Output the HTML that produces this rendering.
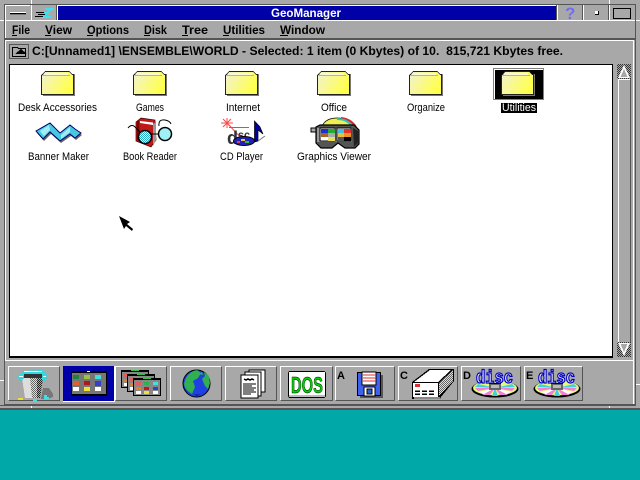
<!DOCTYPE html>
<html><head><meta charset="utf-8"><title>GeoManager</title>
<style>
html,body{margin:0;padding:0;background:#00a8a8;overflow:hidden}
svg{display:block;position:absolute;left:0;top:0}
text{font-family:"Liberation Sans",sans-serif;fill:#000;white-space:pre}
.b{font-weight:bold;font-size:12px}
.l{font-size:11px}
</style></head><body>
<svg width="640" height="480" viewBox="0 0 640 480" xmlns="http://www.w3.org/2000/svg" shape-rendering="crispEdges">
<defs>
<linearGradient id="fg" x1="0" y1="0" x2="1" y2="0.4"><stop offset="0" stop-color="#f2f2d0"/><stop offset="1" stop-color="#ffff50"/></linearGradient>
<pattern id="ck" width="2" height="2" patternUnits="userSpaceOnUse"><rect width="2" height="2" fill="#a8a8a8"/><rect width="1" height="1" fill="#333"/><rect x="1" y="1" width="1" height="1" fill="#333"/></pattern>
<pattern id="ck2" width="2" height="2" patternUnits="userSpaceOnUse"><rect width="2" height="2" fill="#fff"/><rect width="1" height="1" fill="#777"/><rect x="1" y="1" width="1" height="1" fill="#777"/></pattern>
<pattern id="ck3" width="2" height="2" patternUnits="userSpaceOnUse"><rect width="2" height="2" fill="#aaa"/><rect width="1" height="1" fill="#222"/><rect x="1" y="1" width="1" height="1" fill="#222"/></pattern>
<pattern id="ck4" width="2" height="2" patternUnits="userSpaceOnUse"><rect width="2" height="2" fill="#ddd"/><rect width="1" height="1" fill="#666"/><rect x="1" y="1" width="1" height="1" fill="#666"/></pattern>
<pattern id="ckc" width="2" height="2" patternUnits="userSpaceOnUse"><rect width="2" height="2" fill="#fff"/><rect width="1" height="1" fill="#20b0c8"/><rect x="1" y="1" width="1" height="1" fill="#20b0c8"/></pattern>
<g id="folder">
<path d="M32 3h2v22h-32v-2h30z" fill="#777"/>
<path d="M0 4L4 0H28L31 3H33V24H0z" fill="#222"/>
<path d="M1 5L4 1H28L31 4H32V23H1z" fill="url(#fg)"/>
<path d="M2 4h27v1h-27z" fill="#b8b880"/>
<path d="M5 2h22v2h-22z" fill="#f8f8dc"/>
</g>
<g id="disc">
<ellipse cx="23" cy="21" rx="23.500" ry="8.500" fill="#000" shape-rendering="auto"/>
<ellipse cx="23" cy="20" rx="22" ry="7.500" fill="#e8f878" shape-rendering="auto"/>
<path d="M23 20L10 27H18ZM23 20L36 27H28ZM23 20L3 20L6 23ZM23 20L43 20L40 23Z" fill="#f080d8" shape-rendering="auto"/>
<path d="M23 20L6 16L3 19ZM23 20L40 16L43 19ZM23 20L20 28H26Z" fill="#40d0e0" shape-rendering="auto"/>
<path d="M23 20L12 26L7 24ZM23 20L34 26L39 24Z" fill="#ffffff" shape-rendering="auto"/>
<rect x="17" y="16" width="12" height="6" fill="#666"/>
<rect x="19" y="17" width="8" height="3" fill="#bbb"/>
<rect x="17" y="15" width="12" height="1" fill="#000"/>
<text x="4" y="15" textLength="37" lengthAdjust="spacingAndGlyphs" style="font-size:18px;font-weight:bold;fill:#fff;stroke:#0000c0;stroke-width:1.300px;font-family:'Liberation Mono',monospace" shape-rendering="auto">disc</text>
</g>
<g id="mw">
<rect width="28" height="18" fill="#000"/>
<rect x="1" y="2" width="26" height="15" fill="#888"/>
<rect x="10" y="0" width="8" height="1" fill="#30c040"/>
<rect x="3" y="4" width="5" height="3" fill="#e06060"/><rect x="11" y="4" width="5" height="3" fill="#30b050"/><rect x="20" y="4" width="5" height="3" fill="#40e0e0"/>
<rect x="3" y="9" width="5" height="3" fill="#e08030"/><rect x="11" y="9" width="5" height="3" fill="#c01818"/><rect x="20" y="9" width="5" height="3" fill="#3040d0"/>
<rect x="3" y="13" width="5" height="3" fill="#fff"/><rect x="11" y="13" width="5" height="3" fill="#f0e040"/><rect x="20" y="13" width="5" height="3" fill="#fff"/>
</g>
</defs>

<!-- desktop -->
<rect width="640" height="480" fill="#00a8a8"/>
<rect width="640" height="409" fill="#a8a8a8"/>
<rect x="0" y="408" width="640" height="2" fill="#555"/>
<rect x="0" y="405" width="636" height="1" fill="#555"/>
<rect x="0" y="20" width="5" height="1" fill="#fff"/>
<rect x="31" y="0" width="1" height="4" fill="#fff"/>
<rect x="609" y="0" width="1" height="4" fill="#fff"/>
<rect x="31" y="406" width="1" height="2" fill="#fff"/>
<rect x="609" y="406" width="1" height="2" fill="#fff"/>
<rect x="636" y="20" width="4" height="1" fill="#fff"/>
<rect x="636" y="384" width="4" height="1" fill="#fff"/>
<rect x="0" y="380" width="4" height="1" fill="#fff"/>
<rect x="4" y="4" width="631" height="1" fill="#555"/>
<rect x="4" y="4" width="1" height="401" fill="#555"/>
<rect x="635" y="4" width="1" height="402" fill="#555"/>

<!-- title bar -->
<rect x="5" y="5" width="25" height="1" fill="#fff"/><rect x="5" y="5" width="1" height="15" fill="#fff"/>
<rect x="10" y="12" width="16" height="1" fill="#fff"/><rect x="10" y="13" width="16" height="1" fill="#000"/><rect x="10" y="14" width="16" height="1" fill="#777"/>
<rect x="31" y="5" width="1" height="15" fill="#fff"/>
<path d="M45 8h9v2h-2l-4 3h2v1h-2l-3 2h6v2h-10l1-2 4-3h-2v-1h2l3-2h-4z" fill="#40e0f0"/>
<path d="M36 12h8v1h-8zM38 14h7v1h-7zM35 16h8v1h-8z" fill="#000"/>
<rect x="56" y="5" width="1" height="15" fill="#555"/>
<rect x="57" y="5" width="500" height="15" fill="#fff"/>
<rect x="58" y="6" width="498" height="14" fill="#0000a8"/>
<text x="271" y="17" textLength="70" lengthAdjust="spacingAndGlyphs" class="b" style="fill:#fff">GeoManager</text>
<rect x="556" y="5" width="1" height="15" fill="#555"/>
<rect x="557" y="5" width="1" height="15" fill="#fff"/>
<text x="565" y="19" style="fill:#7070e8;font-size:17px;font-weight:bold">?</text>
<rect x="582" y="5" width="1" height="15" fill="#555"/>
<rect x="583" y="5" width="1" height="15" fill="#fff"/>
<rect x="595" y="11" width="4" height="4" fill="#000"/><rect x="595" y="11" width="3" height="3" fill="#fff"/>
<rect x="608" y="5" width="1" height="15" fill="#555"/>
<rect x="609" y="5" width="1" height="15" fill="#fff"/>
<rect x="613" y="8" width="18" height="11" fill="#000"/><rect x="614" y="9" width="16" height="9" fill="#a8a8a8"/>
<rect x="5" y="20" width="630" height="1" fill="#fff"/>

<!-- menu -->
<rect x="5" y="21" width="1" height="18" fill="#fff"/>
<g>
<text x="12" y="34" class="b" textLength="18" lengthAdjust="spacingAndGlyphs">File</text><rect x="12" y="35" width="5" height="1"/>
<text x="45" y="34" class="b" textLength="27" lengthAdjust="spacingAndGlyphs">View</text><rect x="45" y="35" width="6" height="1"/>
<text x="87" y="34" class="b" textLength="42" lengthAdjust="spacingAndGlyphs">Options</text><rect x="87" y="35" width="6" height="1"/>
<text x="144" y="34" class="b" textLength="23" lengthAdjust="spacingAndGlyphs">Disk</text><rect x="144" y="35" width="6" height="1"/>
<text x="182" y="34" class="b" textLength="26" lengthAdjust="spacingAndGlyphs">Tree</text><rect x="182" y="35" width="6" height="1"/>
<text x="223" y="34" class="b" textLength="42" lengthAdjust="spacingAndGlyphs">Utilities</text><rect x="223" y="35" width="6" height="1"/>
<text x="280" y="34" class="b" textLength="45" lengthAdjust="spacingAndGlyphs">Window</text><rect x="280" y="35" width="8" height="1"/>
</g>
<rect x="5" y="38" width="630" height="2" fill="#555"/>

<!-- path bar -->
<rect x="5" y="40" width="1" height="320" fill="#fff"/>
<rect x="5" y="40" width="628" height="1" fill="#fff"/>
<rect x="633" y="40" width="1" height="320" fill="#fff"/>
<rect x="9" y="44" width="20" height="15" fill="#555"/>
<rect x="10" y="45" width="18" height="13" fill="#a8a8a8"/>
<path d="M12.500 56.500v-9h5l1 1h7v8z" fill="none" stroke="#000"/>
<path d="M21 49l6 5h-12z" fill="#000"/>
<text x="32" y="55" class="b" textLength="531" lengthAdjust="spacingAndGlyphs" xml:space="preserve">C:[Unnamed1] \ENSEMBLE\WORLD - Selected: 1 item (0 Kbytes) of 10.  815,721 Kbytes free.</text>

<!-- file area -->
<rect x="9" y="64" width="604" height="294" fill="#000"/>
<rect x="10" y="65" width="602" height="291" fill="#fff"/>

<!-- scrollbar -->
<rect x="618" y="79" width="12" height="263" fill="#a8a8a8"/>
<rect x="618" y="79" width="1" height="263" fill="#fff"/><rect x="618" y="79" width="12" height="1" fill="#fff"/>
<rect x="630" y="79" width="1" height="263" fill="#555"/>
<rect x="617" y="64" width="14" height="15" fill="url(#ck)"/>
<path d="M624 65l6 13h-12z" fill="#fff"/><path d="M624 69l3.500 8h-7z" fill="#a8a8a8"/>
<rect x="617" y="342" width="14" height="15" fill="url(#ck)"/>
<path d="M624 356l-6-13h12z" fill="#fff"/><path d="M624 352l3.500-8h-7z" fill="#a8a8a8"/>

<!-- folders -->
<use href="#folder" x="41" y="71"/>
<use href="#folder" x="133" y="71"/>
<use href="#folder" x="225" y="71"/>
<use href="#folder" x="317" y="71"/>
<use href="#folder" x="409" y="71"/>
<rect x="495" y="70" width="48" height="29" fill="#000"/>
<rect x="493.500" y="68.500" width="50" height="31" fill="none" stroke="#000" stroke-dasharray="1 1"/>
<use href="#folder" x="501" y="71"/>

<text x="18" y="111" textLength="79" lengthAdjust="spacingAndGlyphs" class="l">Desk Accessories</text>
<text x="136" y="111" textLength="28" lengthAdjust="spacingAndGlyphs" class="l">Games</text>
<text x="226" y="111" textLength="34" lengthAdjust="spacingAndGlyphs" class="l">Internet</text>
<text x="321" y="111" textLength="26" lengthAdjust="spacingAndGlyphs" class="l">Office</text>
<text x="407" y="111" textLength="38" lengthAdjust="spacingAndGlyphs" class="l">Organize</text>
<rect x="501" y="103" width="36" height="10" fill="#000"/>
<text x="502" y="111" textLength="34" lengthAdjust="spacingAndGlyphs" class="l" style="fill:#fff">Utilities</text>
<text x="28" y="160" textLength="61" lengthAdjust="spacingAndGlyphs" class="l">Banner Maker</text>
<text x="123" y="160" textLength="54" lengthAdjust="spacingAndGlyphs" class="l">Book Reader</text>
<text x="220" y="160" textLength="43" lengthAdjust="spacingAndGlyphs" class="l">CD Player</text>
<text x="297" y="160" textLength="74" lengthAdjust="spacingAndGlyphs" class="l">Graphics Viewer</text>

<!-- Banner Maker -->
<g shape-rendering="auto">
<path d="M36 131L50 123L60 133L70 125L75 129L81 133L75 138L70 134L60 141L50 132L43 139z" fill="#666" transform="translate(1 2)"/>
<path d="M36 131L50 123L60 133L70 125L75 129L81 133L75 138L70 134L60 141L50 132L43 139z" fill="#48c8e0" stroke="#000070" stroke-width="1"/>
<path d="M49 125L40 131L44 136L50 130z" fill="#a0ecf4"/>
<path d="M70 127L61 135L61 139L70 132z" fill="#a0ecf4"/>
</g>
<!-- Book Reader -->
<g shape-rendering="auto">
<path d="M136 122L141 118L155 120L156 140L151 147L136 141z" fill="#c01818" stroke="#400000" stroke-width=".7"/>
<path d="M140 121L153 122.500L153 125L140 123z" fill="#fff"/>
<path d="M137 122L139 120L140 141L137 140z" fill="#800000"/>
<path d="M153 124L156 122L156 140L153 146z" fill="#999"/>
<path d="M128 128Q132 123 136 128L140 132M159 126Q158 119 165 120Q170 121 171 124M151 134L159 134" fill="none" stroke="#000"/>
<circle cx="145" cy="137" r="6.500" fill="url(#ckc)" stroke="#000" stroke-width="1.500"/>
<circle cx="165" cy="134" r="6.500" fill="#a0f0f8" stroke="#000" stroke-width="1.500"/>
</g>
<!-- CD Player -->
<g shape-rendering="auto">
<path d="M221 123h12M227 118v10M223 119l8 8M231 119l-8 8M227 123L243 140" stroke="#ff4848" stroke-width="1" fill="none"/>
<rect x="229" y="127" width="20" height="1" fill="#777"/>
<text x="227" y="144" textLength="11" lengthAdjust="spacingAndGlyphs" style="font-size:18px;font-weight:bold;fill:#333">d</text>
<text x="238" y="139" textLength="12" lengthAdjust="spacingAndGlyphs" style="font-size:12px;font-weight:bold;fill:#333">sc</text>
<ellipse cx="244" cy="141" rx="10.500" ry="4.500" fill="#2020b8" stroke="#000"/>
<rect x="241" y="139" width="4" height="2" fill="#f0d030"/><rect x="245" y="141" width="4" height="2" fill="#30c040"/><rect x="237" y="141" width="3" height="2" fill="#e04040"/>
<path d="M254.500 142V121L260 127L263 134L258 130V141z" fill="#0000a0" stroke="#000" stroke-width=".7"/>
<path d="M258 141L265 136" stroke="#777" fill="none"/>
</g>
<!-- Graphics Viewer -->
<g shape-rendering="auto">
<path d="M322 126Q326 118 337 118Q349 118 354 126z" fill="#f0f050" stroke="#000" stroke-width=".7"/>
<path d="M341 118Q351 119 356 127" stroke="#d03030" stroke-width="2" fill="none"/>
<path d="M337 119Q347 119 352 126" stroke="#30c0c0" stroke-width="2" fill="none"/>
<rect x="311" y="128" width="6" height="4" fill="#aaa" stroke="#000"/>
<path d="M316 127L320 125H354L359 130V144L355 148H345L338 143L332 148H321L316 143z" fill="#555" stroke="#000" stroke-width="1.200"/>
<path d="M317 128H352V142H317z" fill="#999"/>
<path d="M353 128L358 131V143L354 147z" fill="#222"/>
</g>
<rect x="320" y="128" width="15" height="13" fill="#fff" stroke="#000"/>
<rect x="321" y="129" width="7" height="4" fill="#2030d0"/><rect x="328" y="129" width="7" height="4" fill="#20b030"/>
<rect x="321" y="133" width="7" height="4" fill="#b06020"/><rect x="328" y="133" width="7" height="4" fill="#aaa"/>
<rect x="328" y="137" width="7" height="4" fill="#e8e060"/>
<rect x="337" y="128" width="14" height="13" fill="#fff" stroke="#000"/>
<rect x="338" y="129" width="6" height="4" fill="#40c0e0"/><rect x="344" y="129" width="7" height="4" fill="#e03030"/>
<rect x="338" y="133" width="6" height="4" fill="#e8c040"/><rect x="344" y="133" width="7" height="4" fill="#f09020"/>
<rect x="338" y="137" width="6" height="4" fill="#555"/><rect x="344" y="137" width="7" height="4" fill="#000"/>

<!-- cursor -->
<path d="M119 216L130 222L127 224L133 229L132 231L126 226L124 229z" fill="#000" shape-rendering="auto"/>

<!-- toolbar -->
<rect x="5" y="360" width="629" height="1" fill="#fff"/>
<rect x="633" y="360" width="1" height="44" fill="#fff"/>
<rect x="5" y="404" width="630" height="1" fill="#555"/>
<g fill="none">
<path d="M8.500 400.500v-34h51" stroke="#fff"/><path d="M59.500 366.500v34h-51" stroke="#555"/>
<path d="M115.500 400.500v-34h51" stroke="#fff"/><path d="M166.500 366.500v34h-51" stroke="#555"/>
<path d="M170.500 400.500v-34h51" stroke="#fff"/><path d="M221.500 366.500v34h-51" stroke="#555"/>
<path d="M225.500 400.500v-34h51" stroke="#fff"/><path d="M276.500 366.500v34h-51" stroke="#555"/>
<path d="M280.500 400.500v-34h52" stroke="#fff"/><path d="M332.500 366.500v34h-52" stroke="#555"/>
<path d="M335.500 400.500v-34h59" stroke="#fff"/><path d="M394.500 366.500v34h-59" stroke="#555"/>
<path d="M398.500 400.500v-34h59" stroke="#fff"/><path d="M457.500 366.500v34h-59" stroke="#555"/>
<path d="M461.500 400.500v-34h59" stroke="#fff"/><path d="M520.500 366.500v34h-59" stroke="#555"/>
<path d="M524.500 400.500v-34h58" stroke="#fff"/><path d="M582.500 366.500v34h-58" stroke="#555"/>
</g>
<rect x="63" y="366" width="51" height="35" fill="#0000a8"/>
<rect x="114" y="366" width="1" height="36" fill="#fff"/><rect x="63" y="401" width="52" height="1" fill="#fff"/>

<!-- trash -->
<path d="M43 388h6l4 6v3l-5 2h-7z" fill="#777"/>
<path d="M22 378H30L32 398H25z" fill="#ddd"/>
<path d="M30 378H37L37 398H32z" fill="url(#ck4)"/>
<path d="M37 378H43L40 398H37z" fill="url(#ck3)"/>
<path d="M18 376L24 371L42 370L47 375L46 382L43 380L40 378H24L21 381L19 380z" fill="#30d8e0"/>
<path d="M24 374h18v4h-18z" fill="#333"/>
<path d="M24 371h18v1h-18zM19 376h4v1h-4zM43 376h3v1h-3z" fill="#fff"/>
<rect x="18" y="398" width="5" height="2" fill="#f0e030"/>
<path d="M33 399h4v3h-4zM44 395h3v2h2v2h-5z" fill="#40e0e8"/>

<!-- selected windows icon -->
<rect x="71" y="371" width="36" height="25" fill="#000"/>
<rect x="72" y="373" width="34" height="21" fill="#777"/>
<rect x="87" y="371" width="3" height="1" fill="#fff"/>
<rect x="73" y="375" width="6" height="4" fill="#208040"/><rect x="84" y="375" width="6" height="4" fill="#a0c040"/><rect x="95" y="375" width="6" height="4" fill="#40e0e0"/>
<rect x="73" y="381" width="6" height="4" fill="#e06030"/><rect x="84" y="381" width="6" height="4" fill="#b01818"/><rect x="95" y="381" width="6" height="5" fill="#3040d0"/>
<rect x="73" y="387" width="6" height="4" fill="#fff"/><rect x="84" y="387" width="6" height="4" fill="#f0e040"/><rect x="95" y="387" width="6" height="4" fill="#fff"/>
<!-- stacked windows -->
<use href="#mw" x="121" y="370"/>
<use href="#mw" x="127" y="374"/>
<use href="#mw" x="133" y="378"/>

<!-- globe -->
<g shape-rendering="auto">
<circle cx="196.500" cy="383.500" r="13.500" fill="#2040e0" stroke="#000" stroke-width="1"/>
<path d="M186 378Q190 371 197 370L201 373L198 378L193 381L195 387L192 394Q185 390 184 384zM204 372L209 376L210 383L208 389L205 386L202 379L205 376zM199 374L202 372L203 375z" fill="#30b050"/>
<path d="M190 392Q197 397 204 392L197 396z" fill="#1010a0"/>
</g>

<!-- documents -->
<rect x="249" y="370" width="16" height="22" fill="#fff" stroke="#000"/>
<rect x="245" y="372" width="16" height="24" fill="#fff" stroke="#000"/>
<rect x="241" y="375" width="17" height="23" fill="#fff" stroke="#000"/>
<path d="M244 379l2 1 2-1 2 1 2-1 2 1" stroke="#000" stroke-width="1.500" fill="none" shape-rendering="auto"/>
<path d="M243 384h13M243 386h9M243 388h13M243 390h11M243 392h13M243 394h8" stroke="#000" stroke-width="1"/>

<!-- DOS -->
<path d="M289 371h35l2 2v23l-2 2h-35l-1-2v-23z" fill="#000"/>
<rect x="289" y="372" width="36" height="25" fill="#fff"/>
<rect x="289" y="395" width="36" height="2" fill="#bbb"/>
<text x="291" y="393" textLength="32" lengthAdjust="spacingAndGlyphs" style="font-size:23px;font-weight:bold;fill:#00d000;stroke:#000;stroke-width:.5px" shape-rendering="auto">DOS</text>

<!-- drive letters -->
<text x="337" y="379" style="font-size:11px;font-weight:bold">A</text>
<text x="400" y="379" style="font-size:11px;font-weight:bold">C</text>
<text x="463" y="379" style="font-size:11px;font-weight:bold">D</text>
<text x="526" y="379" style="font-size:11px;font-weight:bold">E</text>

<!-- floppy -->
<rect x="360" y="375" width="23" height="23" fill="#555"/>
<rect x="357" y="372" width="24" height="24" fill="#000"/>
<rect x="358" y="373" width="22" height="22" fill="#4060f0"/>
<rect x="362" y="372" width="14" height="13" fill="#fff" stroke="#000"/>
<path d="M363 375h13M363 378h13M363 381h13" stroke="#e03030" stroke-width="1"/>
<rect x="364" y="387" width="11" height="9" fill="#fff" stroke="#000"/>
<rect x="367" y="389" width="5" height="5" fill="#3060d0" stroke="#000"/>

<!-- hard drive -->
<path d="M412 382L429 369H454V381L441 397L440 399H412z" fill="#000"/>
<path d="M414 382L430 370H451L438 382z" fill="#fff"/>
<path d="M439 383L453 370V381L439 396z" fill="url(#ck4)"/>
<rect x="413" y="383" width="25" height="14" fill="#fff"/>
<rect x="415" y="384" width="5" height="3" fill="#e03030"/>
<path d="M415 391h5M422 391h5M429 391h5M415 394h5M422 394h5M429 394h5" stroke="#000" stroke-width="1.500"/>
<rect x="414" y="397" width="26" height="2" fill="#888"/>

<!-- CDs -->
<use href="#disc" x="472" y="368"/>
<use href="#disc" x="534" y="368"/>

</svg>
</body></html>
